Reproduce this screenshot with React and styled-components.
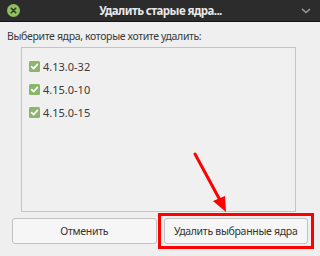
import React from "react";
import styled, { createGlobalStyle } from "styled-components";

const kernels = ["4.13.0-32", "4.15.0-10", "4.15.0-15"];

function CloseIcon() {
  return (
    <svg width="13" height="13" viewBox="0 0 13 13">
      <circle cx="6.5" cy="6.5" r="6.5" fill="#8fbf5f" />
      <path d="M4.3 4.3l4.4 4.4M8.7 4.3l-4.4 4.4" stroke="#2d3a22" strokeWidth="1.6" strokeLinecap="round" />
    </svg>
  );
}

function Chevron() {
  return (
    <svg width="10" height="6" viewBox="0 0 10 6">
      <path d="M1 1l4 3.5L9 1" stroke="#9a9a9a" strokeWidth="1.6" fill="none" />
    </svg>
  );
}

function Check() {
  return (
    <svg width="11" height="11" viewBox="0 0 11 11">
      <rect x="0" y="0" width="11" height="11" rx="1.5" fill="#8ab66a" />
      <path d="M2.6 5.6l2 2 3.8-4.2" stroke="#fff" strokeWidth="1.7" fill="none" strokeLinecap="round" strokeLinejoin="round" />
    </svg>
  );
}

function App() {
  return (
    <Window>
      <GlobalStyle />
      <TitleBar>
        <CloseIcon />
        <Title>Удалить старые ядра...</Title>
        <Chevron />
      </TitleBar>
      <Body>
        <Label>Выберите ядра, которые хотите удалить:</Label>
        <ListBox>
          {kernels.map((k) => (
            <Item key={k}>
              <Check />
              <span>{k}</span>
            </Item>
          ))}
        </ListBox>
        <Buttons>
          <Button>Отменить</Button>
          <Button>Удалить выбранные ядра</Button>
        </Buttons>
      </Body>
      <Highlight />
      <Arrow width="50" height="66" viewBox="0 0 50 66">
        <path d="M4 3L30 51" stroke="#f00" strokeWidth="3" strokeLinecap="round" />
        <path d="M22 50l13 11-1-16z" fill="#f00" />
      </Arrow>
    </Window>
  );
}

export default App;

const GlobalStyle = createGlobalStyle`
  body {
    margin: 0;
    background: #efefef;
    font-family: "Noto Sans", "DejaVu Sans", sans-serif;
  }
`;

const Window = styled.div`
  position: relative;
  width: 320px;
  height: 256px;
  display: flex;
  flex-direction: column;
  background: #efefef;
  overflow: hidden;
`;

const TitleBar = styled.div`
  height: 21px;
  display: flex;
  align-items: center;
  justify-content: space-between;
  padding: 0 9px 0 7px;
  background: #2c2c2c;
  border-bottom: 1px solid #141414;
`;

const Title = styled.div`
  color: #e8e8e8;
  font-size: 11.5px;
  font-weight: 700;
  letter-spacing: -0.55px;
`;

const Body = styled.div`
  flex: 1;
  display: flex;
  flex-direction: column;
  padding: 5px 12px 0 7px;
`;

const Label = styled.div`
  font-size: 10.5px;
  letter-spacing: -0.35px;
  color: #3a3a3a;
  height: 18px;
  line-height: 18px;
  margin-bottom: 2px;
`;

const ListBox = styled.div`
  margin: 0 12px 0 14px;
  height: 165px;
  box-sizing: border-box;
  border: 1px solid #c4c4c4;
  background: #f0f0f0;
  padding: 10px 0 0 7px;
  display: flex;
  flex-direction: column;
  gap: 7px;
`;

const Item = styled.div`
  display: flex;
  align-items: center;
  gap: 3px;
  height: 16px;
  font-size: 11px;
  color: #3a3a3a;
`;

const Buttons = styled.div`
  display: flex;
  gap: 7px;
  margin-top: 6px;
  padding-left: 5px;
`;

const Button = styled.button`
  flex: 1;
  height: 26px;
  border: 1px solid #c2c2c2;
  border-radius: 3px;
  background: #f6f6f6;
  font-family: inherit;
  font-size: 10.5px;
  letter-spacing: -0.3px;
  color: #333;
  padding: 0;
`;

const Highlight = styled.div`
  position: absolute;
  left: 158px;
  top: 213px;
  width: 156px;
  height: 36px;
  box-sizing: border-box;
  border: 3px solid #f00;
`;

const Arrow = styled.svg`
  position: absolute;
  left: 191px;
  top: 151px;
`;
